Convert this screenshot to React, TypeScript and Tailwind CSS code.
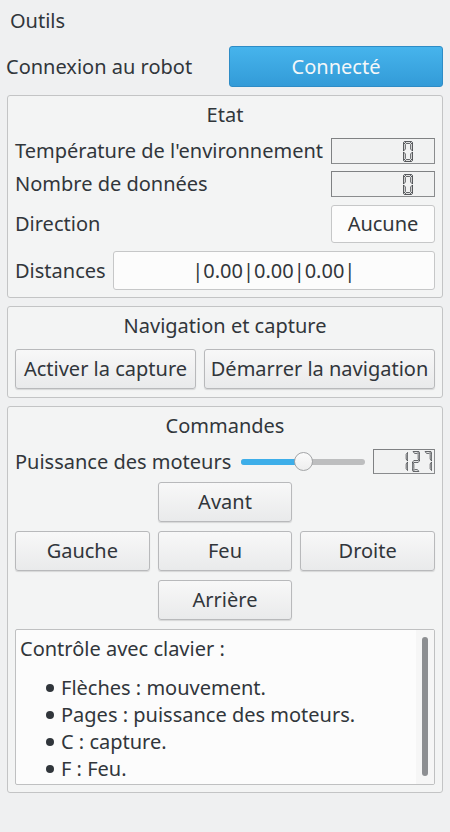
import React from "react";

const SEGS: Record<string, string> = {
  a: "1,0 9,0 7,2 3,2",
  f: "0,1 2,3 2,8 0,10",
  b: "10,1 10,10 8,8 8,3",
  g: "1,10.5 2,9.5 8,9.5 9,10.5 8,11.5 2,11.5",
  e: "0,11 2,13 2,18 0,20",
  c: "10,11 10,20 8,18 8,13",
  d: "1,21 3,19 7,19 9,21",
};
const DIGITS: Record<string, string> = {
  "0": "abcdef",
  "1": "bc",
  "2": "abged",
  "7": "abc",
};

function Digit({ d, w }: { d: string; w: number }) {
  return (
    <svg width={w} height={21} viewBox="-0.5 -0.5 11 22" preserveAspectRatio="none" className="block">
      {DIGITS[d].split("").map((s) => (
        <polygon key={s} points={SEGS[s]} fill="none" stroke="#45484b" strokeWidth={1} />
      ))}
    </svg>
  );
}

function Lcd({ value, className, dw, gap, pr }: { value: string; className: string; dw: number; gap: string; pr: string }) {
  return (
    <div
      className={`flex items-center justify-end border border-t-[#7f8183] border-l-[#7f8183] border-b-[#8a8c8e] border-r-[#8a8c8e] bg-[#f1f2f2] ${gap} ${pr} ${className}`}
    >
      {value.split("").map((c, i) => (
        <Digit key={i} d={c} w={dw} />
      ))}
    </div>
  );
}

function Btn({ children, className = "" }: { children: React.ReactNode; className?: string }) {
  return (
    <div
      className={`h-[40px] flex items-center justify-center rounded-[3px] border border-[#b8b9bb] bg-gradient-to-b from-[#f8f8f8] to-[#e9eaeb] shadow-[0_1px_1px_rgba(0,0,0,0.12)] text-[#31363b] ${className}`}
    >
      {children}
    </div>
  );
}

function Group({ title, children, className = "", pb = "pb-[7px]" }: { title: string; children: React.ReactNode; className?: string; pb?: string }) {
  return (
    <div className={`mx-[7px] border border-[#c3c4c5] rounded-[3px] bg-[#f3f4f4] px-[7px] ${pb} ${className}`}>
      <div className="h-[36px] pt-[1px] flex items-center justify-center">{title}</div>
      <div className="mt-[6px]">{children}</div>
    </div>
  );
}

export default function App() {
  return (
    <div className="w-[450px] h-[832px] bg-[#eff0f1] text-[#31363b] text-[20px] leading-none font-['Noto_Sans',sans-serif] overflow-hidden">
      <div className="h-[40px] pl-[10px] pt-[1px] flex items-center">Outils</div>
      <div className="mt-[6px] h-[41px] flex items-center justify-between pl-[6px] pr-[7px]">
        <span>Connexion au robot</span>
        <div className="w-[214px] h-[41px] flex items-center justify-center rounded-[3px] border border-[#2e8cc6] bg-gradient-to-b from-[#46b4ec] to-[#339bd8] text-[#f4f7f9]">
          Connecté
        </div>
      </div>

      <Group title="Etat" className="mt-[8px]">
        <div className="h-[26px] flex items-center justify-between">
          <span>Température de l'environnement</span>
          <Lcd value="0" className="w-[104px] h-[26px]" dw={10} gap="gap-0" pr="pr-[21px]" />
        </div>
        <div className="mt-[7px] h-[26px] flex items-center justify-between">
          <span>Nombre de données</span>
          <Lcd value="0" className="w-[104px] h-[26px]" dw={10} gap="gap-0" pr="pr-[21px]" />
        </div>
        <div className="mt-[8px] h-[38px] flex items-center justify-between">
          <span>Direction</span>
          <div className="w-[104px] h-[38px] flex items-center justify-center rounded-[3px] border border-[#c6c7c8] bg-[#fcfcfc]">
            Aucune
          </div>
        </div>
        <div className="mt-[8px] h-[39px] flex items-center gap-[7px]">
          <span>Distances</span>
          <div className="flex-1 h-[39px] flex items-center justify-center rounded-[3px] border border-[#c6c7c8] bg-[#fcfcfc]">
            |0.00|0.00|0.00|
          </div>
        </div>
      </Group>

      <Group title="Navigation et capture" className="mt-[8px]" pb="pb-[8px]">
        <div className="flex gap-[8px]">
          <Btn className="w-[181px]">Activer la capture</Btn>
          <Btn className="flex-1">Démarrer la navigation</Btn>
        </div>
      </Group>

      <Group title="Commandes" className="mt-[8px]">
        <div className="h-[25px] flex items-center">
          <span>Puissance des moteurs</span>
          <div className="ml-[10px] w-[124px] h-[25px] relative flex items-center">
            <div className="h-[6px] w-full rounded-full bg-[#bdbebf]" />
            <div className="absolute left-0 top-[10px] h-[6px] w-[62px] rounded-full bg-[#3daee9]" />
            <div className="absolute left-[53px] top-[3px] w-[19px] h-[19px] rounded-full border border-[#a3a5a7] bg-gradient-to-b from-[#fbfbfb] to-[#eeeeee]" />
          </div>
          <Lcd value="127" className="ml-auto w-[62px] h-[25px]" dw={8} gap="gap-[4px]" pr="pr-[2px]" />
        </div>
        <div className="mt-[8px] grid grid-cols-3 gap-x-[8px] gap-y-[9px]">
          <div />
          <Btn>Avant</Btn>
          <div />
          <Btn>Gauche</Btn>
          <Btn>Feu</Btn>
          <Btn>Droite</Btn>
          <div />
          <Btn>Arrière</Btn>
          <div />
        </div>
        <div className="mt-[9px] h-[156px] rounded-[2px] border border-[#bfc0c1] bg-[#fcfcfc] flex overflow-hidden">
          <div className="flex-1 pl-[4px] pt-[9px]">
            <div className="h-[20px] flex items-center">Contrôle avec clavier :</div>
            <div className="mt-[19px]">
              {["Flèches : mouvement.", "Pages : puissance des moteurs.", "C : capture.", "F : Feu."].map((t, i) => (
                <div key={t} className={`h-[20px] flex items-center ${i > 0 ? "mt-[7px]" : ""}`}>
                  <span className="ml-[26px] w-[15px] flex items-center">
                    <span className="w-[8px] h-[8px] rounded-full bg-[#31363b]" />
                  </span>
                  <span>{t}</span>
                </div>
              ))}
            </div>
          </div>
          <div className="w-[18px] bg-[#f6f6f6] pt-[7px] pb-[8px] flex justify-center">
            <div className="w-[6px] h-full rounded-full bg-[#8d8f92]" />
          </div>
        </div>
      </Group>
    </div>
  );
}
